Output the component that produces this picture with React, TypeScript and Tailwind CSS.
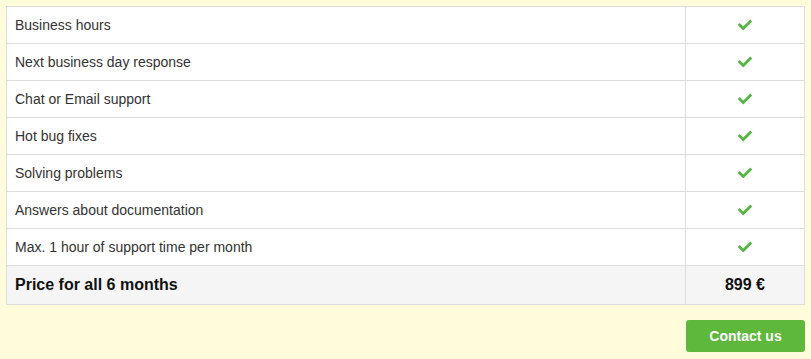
import React from "react"

const features = [
  "Business hours",
  "Next business day response",
  "Chat or Email support",
  "Hot bug fixes",
  "Solving problems",
  "Answers about documentation",
  "Max. 1 hour of support time per month",
]

function Check() {
  return (
    <svg viewBox="0 0 512 512" className="mx-auto h-[14px] w-[14px] fill-[#55b544]">
      <path d="M173.898 439.404l-166.4-166.4c-9.997-9.997-9.997-26.206 0-36.204l36.203-36.204c9.997-9.998 26.207-9.998 36.204 0L192 312.69 432.095 72.596c9.997-9.997 26.207-9.997 36.204 0l36.203 36.204c9.997 9.997 9.997 26.206 0 36.204l-294.4 294.401c-9.998 9.997-26.207 9.997-36.204-.001z" />
    </svg>
  )
}

export default function App() {
  return (
    <div className="min-h-[359px] bg-[#fefcdb] px-[6px] pt-[6px] font-['Liberation_Sans',Arial,sans-serif]">
      <table className="w-full border-collapse bg-white text-[14px] text-[#333]">
        <tbody>
          {features.map((f) => (
            <tr key={f}>
              <td className="border border-[#dddddd] px-2 py-2 leading-5">{f}</td>
              <td className="w-[119px] border border-[#dddddd] px-2 py-2 leading-5">
                <Check />
              </td>
            </tr>
          ))}
          <tr className="bg-[#f5f5f5] text-[16px] font-bold text-[#111]">
            <td className="border border-[#dddddd] px-2 py-2 leading-[22px]">Price for all 6 months</td>
            <td className="border border-[#dddddd] px-2 py-2 text-center leading-[22px]">899 €</td>
          </tr>
        </tbody>
      </table>
      <div className="mt-[15px] flex justify-end">
        <button className="h-[32px] w-[119px] rounded-[3px] bg-[#5db83b] text-[14px] font-bold text-white">
          Contact us
        </button>
      </div>
    </div>
  )
}
